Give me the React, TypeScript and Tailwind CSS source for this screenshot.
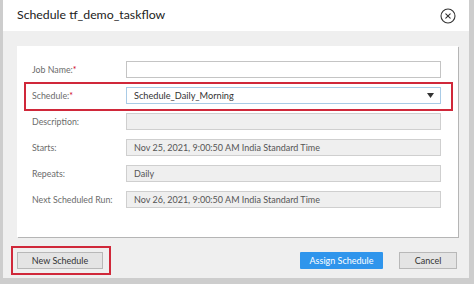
const FONT = { fontFamily: 'Lato, "Open Sans", sans-serif' }

type Row = { label: string; required?: boolean; value?: string; kind: 'input' | 'select' | 'readonly' }

const ROWS: Row[] = [
  { label: 'Job Name:', required: true, kind: 'input' },
  { label: 'Schedule:', required: true, value: 'Schedule_Daily_Morning', kind: 'select' },
  { label: 'Description:', kind: 'readonly' },
  { label: 'Starts:', value: 'Nov 25, 2021, 9:00:50 AM India Standard Time', kind: 'readonly' },
  { label: 'Repeats:', value: 'Daily', kind: 'readonly' },
  { label: 'Next Scheduled Run:', value: 'Nov 26, 2021, 9:00:50 AM India Standard Time', kind: 'readonly' },
]

function CloseIcon() {
  return (
    <svg width="16" height="16" viewBox="0 0 16 16" fill="none" stroke="#333" strokeWidth="1.1" strokeLinecap="round">
      <circle cx="8" cy="8" r="7" />
      <line x1="5.8" y1="5.8" x2="10.2" y2="10.2" />
      <line x1="10.2" y1="5.8" x2="5.8" y2="10.2" />
    </svg>
  )
}

function Field({ row }: { row: Row }) {
  if (row.kind === 'select') {
    return (
      <div className="flex h-[17px] w-[315px] items-center justify-between border border-[#a9cbe6] bg-white pl-[7px] pr-[6px] text-[9.2px] text-[#333]">
        <span>{row.value}</span>
        <svg width="7" height="5" viewBox="0 0 7 5"><polygon points="0,0 7,0 3.5,5" fill="#333" /></svg>
      </div>
    )
  }
  if (row.kind === 'input') {
    return <div className="h-[17px] w-[315px] border border-[#c4c4c4] bg-white" />
  }
  return (
    <div className="flex h-[17px] w-[315px] items-center border border-[#cfcfcf] bg-[#efefef] pl-[7px] text-[9px] text-[#555]">
      {row.value}
    </div>
  )
}

export default function App() {
  return (
    <div className="flex h-[284px] w-[474px] bg-[#cdcdcd] pb-[6px] pl-[3px] pr-[5px]" style={FONT}>
      <div className="flex flex-1 flex-col bg-white">
        {/* Header */}
        <div className="flex h-[31px] items-center justify-between pl-[14px] pr-[13px]">
          <span className="text-[12.3px] text-[#222]">Schedule tf_demo_taskflow</span>
          <CloseIcon />
        </div>

        {/* Body */}
        <div className="flex flex-1 flex-col bg-[#efefef] pl-[14px] pr-[11px] pt-[15px]">
          <div className="relative flex h-[191px] flex-col gap-[9px] bg-white pl-[15px] pt-[15px] shadow-[1px_1px_0_#b5b5b5]">
            {ROWS.map(row => (
              <div key={row.label} className="flex h-[17px] items-center">
                <span className="w-[94px] text-[8.8px] text-[#6b6b6b]">
                  {row.label}
                  {row.required && <span className="text-[#d0021b]">*</span>}
                </span>
                <Field row={row} />
              </div>
            ))}
            {/* highlight around Schedule row */}
            <div className="absolute left-[7px] top-[36px] h-[29px] w-[429px] border-2 border-[#d0283a]" />
          </div>

          {/* Footer */}
          <div className="relative mt-[15px] flex items-center justify-between pr-[1px]">
            <button className="h-[17px] w-[86px] border border-[#b8b8b8] bg-[#e4e4e4] text-[9px] text-[#333]">New Schedule</button>
            <div className="flex gap-[16px]">
              <button className="h-[17px] w-[83px] rounded-[1px] bg-[#2f95ec] text-[9px] text-white">Assign Schedule</button>
              <button className="h-[17px] w-[58px] border border-[#b8b8b8] bg-[#e4e4e4] text-[9px] text-[#333]">Cancel</button>
            </div>
            <div className="absolute left-[-6px] top-[-6px] h-[29px] w-[100px] border-2 border-[#d0283a]" />
          </div>
        </div>
      </div>
    </div>
  )
}
